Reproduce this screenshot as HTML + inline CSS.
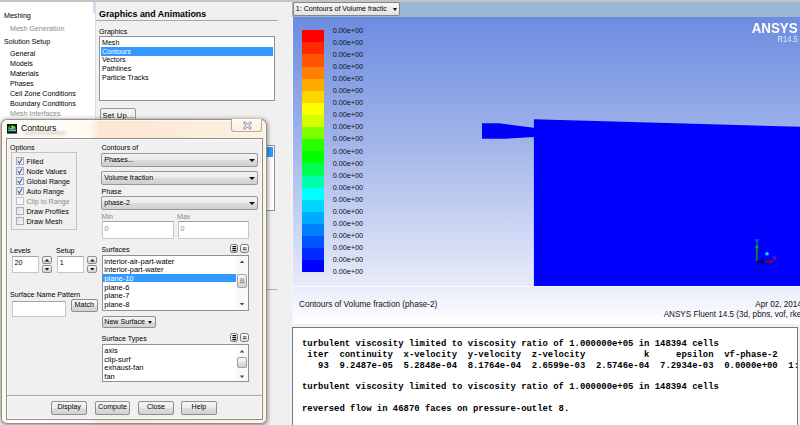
<!DOCTYPE html>
<html><head><meta charset="utf-8"><title>Fluent</title>
<style>
*{box-sizing:border-box;margin:0;padding:0}
html,body{width:800px;height:425px;overflow:hidden;background:#f0f0f0}
body{position:relative;font-family:"Liberation Sans",sans-serif;font-size:7.1px;color:#000}
.a{position:absolute;white-space:nowrap}
.t{position:absolute;white-space:nowrap;line-height:12px;height:12px}
.g{color:#8a8a8a}
.lb{position:absolute;background:#fff;border:1px solid #8c919a}
.sel{position:absolute;background:#3399ff}
.btn{position:absolute;border:1px solid #8e8f8f;border-radius:2px;background:linear-gradient(#f4f4f4 0%,#ececec 48%,#dedede 52%,#d2d2d2 100%);text-align:center;line-height:11px;white-space:nowrap}
.dd{position:absolute;border:1px solid #979797;border-radius:2px;background:linear-gradient(#f2f2f2 0%,#ebebeb 48%,#dddddd 52%,#cfcfcf 100%);line-height:12px;padding-left:2.2px;white-space:nowrap}
.dd:after{content:"";position:absolute;right:2px;top:5px;border:3px solid transparent;border-top:3.5px solid #111;border-bottom:0}
.inp{position:absolute;background:#fff;border:1px solid #c3c7cf;border-top-color:#a0a3aa;line-height:12px;padding-left:2px}
.cb{position:absolute;width:8px;height:8px;border:1px solid #a9adb4;background:linear-gradient(135deg,#d9dde4,#fafafa)}
.ck{position:absolute;font-size:7.1px;line-height:8px;color:#3a4fb0;font-weight:bold}
.con{position:absolute;font-family:"Liberation Mono",monospace;font-weight:bold;font-size:8.92px;line-height:10.7px;white-space:pre;color:#000}
.lg{position:absolute;left:332.7px;font-size:7.25px;line-height:10px;height:10px;color:#111;white-space:nowrap}
</style></head><body>
<!-- top bar -->
<div class="a" style="left:0;top:0;width:800px;height:2px;background:#c4c4c4"></div>
<!-- left nav -->
<div class="a" style="left:0;top:2px;width:95.2px;height:423px;background:#fff"></div>
<div class="a" style="left:92.7px;top:1.6px;width:2.4px;height:11.8px;background:linear-gradient(90deg,#c9d3ef,#dfe5f6)"></div>
<div class="t" style="left:4px;top:10.4px">Meshing</div>
<div class="t g" style="left:10px;top:23.4px">Mesh Generation</div>
<div class="t" style="left:4px;top:36px">Solution Setup</div>
<div class="t" style="left:10px;top:48.4px">General</div>
<div class="t" style="left:10px;top:58.1px">Models</div>
<div class="t" style="left:10px;top:68.1px">Materials</div>
<div class="t" style="left:10px;top:78.1px">Phases</div>
<div class="t" style="left:10px;top:88.1px">Cell Zone Conditions</div>
<div class="t" style="left:10px;top:98.1px">Boundary Conditions</div>
<div class="t g" style="left:10px;top:108.2px">Mesh Interfaces</div>
<!-- task page -->
<div class="a" style="left:95.2px;top:2px;width:196.8px;height:423px;background:#f0f0f0;border-left:1px solid #dcdcdc"></div>
<div class="a" style="left:99px;top:7px;font-weight:bold;font-size:8.9px;line-height:14px;letter-spacing:0">Graphics and Animations</div>
<div class="a" style="left:95.6px;top:20px;width:182.4px;height:1px;background:#a8a8a8"></div>
<div class="t" style="left:99px;top:25.7px">Graphics</div>
<div class="lb" style="left:99px;top:36px;width:176px;height:65px"></div>
<div class="sel" style="left:101px;top:47px;width:172px;height:9px"></div>
<div class="t" style="left:102px;top:37px">Mesh</div>
<div class="t" style="left:102px;top:45.5px;color:#fff">Contours</div>
<div class="t" style="left:102px;top:54px">Vectors</div>
<div class="t" style="left:102px;top:63px">Pathlines</div>
<div class="t" style="left:102px;top:71.5px">Particle Tracks</div>
<div class="btn" style="left:100.3px;top:108.3px;width:35.6px;height:14px;font-size:7.5px;letter-spacing:.25px;line-height:13.4px;border-color:#9a9a9a;background:linear-gradient(#f6f6f6,#ebebeb)">Set Up...</div>
<!-- hidden listbox behind dialog -->
<div class="lb" style="left:200px;top:145px;width:75px;height:66px"></div>
<div class="sel" style="left:202px;top:147px;width:71px;height:10px"></div>
<div class="a" style="left:100px;top:289px;width:178px;height:1px;background:#b4b4b4"></div>


<!-- graphics window -->
<div class="a" style="left:292px;top:2px;width:508px;height:15px;background:#9bb5d4"></div>
<div class="a" style="left:292px;top:16.7px;width:508px;height:269.5px;background:linear-gradient(#6c8cdf 0%,#a2b5ea 47%,#e8ecfa 100%)"></div>
<div class="a" style="left:292px;top:17px;width:1px;height:307px;background:#f4f6ff"></div>
<div class="btn" style="left:292.8px;top:2.1px;width:107.2px;height:14px;text-align:left;padding-left:2px;font-size:7.1px;line-height:12px;overflow:hidden;background:linear-gradient(#f6f6f6,#e2e2e2);border-color:#858585">1: Contours of Volume fractic<span class="a" style="right:1.8px;top:5px;border:2.5px solid transparent;border-top:3px solid #111;border-bottom:0"></span></div>
<svg class="a" style="left:292px;top:16px" width="508" height="270" viewBox="292 16 508 270">
<polygon points="482,123.2 499,123.3 533.9,127.8 533.9,119.3 800,126.8 800,285.9 533.9,285.9 533.9,136.9 506,138.7 482,138.8" fill="#0000ff"/>
</svg>
<div id="legend">
<div class="a" style="left:302.2px;top:30.20px;width:21.8px;height:12.41px;background:#ff0000"></div>
<div class="a" style="left:302.2px;top:42.31px;width:21.8px;height:12.41px;background:#ff2a00"></div>
<div class="a" style="left:302.2px;top:54.42px;width:21.8px;height:12.41px;background:#ff5500"></div>
<div class="a" style="left:302.2px;top:66.53px;width:21.8px;height:12.41px;background:#ff8000"></div>
<div class="a" style="left:302.2px;top:78.64px;width:21.8px;height:12.41px;background:#ffaa00"></div>
<div class="a" style="left:302.2px;top:90.75px;width:21.8px;height:12.41px;background:#ffd500"></div>
<div class="a" style="left:302.2px;top:102.86px;width:21.8px;height:12.41px;background:#ffff00"></div>
<div class="a" style="left:302.2px;top:114.97px;width:21.8px;height:12.41px;background:#d4ff00"></div>
<div class="a" style="left:302.2px;top:127.08px;width:21.8px;height:12.41px;background:#80ff00"></div>
<div class="a" style="left:302.2px;top:139.19px;width:21.8px;height:12.41px;background:#2aff00"></div>
<div class="a" style="left:302.2px;top:151.30px;width:21.8px;height:12.41px;background:#00ff00"></div>
<div class="a" style="left:302.2px;top:163.41px;width:21.8px;height:12.41px;background:#00ff55"></div>
<div class="a" style="left:302.2px;top:175.52px;width:21.8px;height:12.41px;background:#00ffaa"></div>
<div class="a" style="left:302.2px;top:187.63px;width:21.8px;height:12.41px;background:#00ffff"></div>
<div class="a" style="left:302.2px;top:199.74px;width:21.8px;height:12.41px;background:#00d4ff"></div>
<div class="a" style="left:302.2px;top:211.85px;width:21.8px;height:12.41px;background:#00aaff"></div>
<div class="a" style="left:302.2px;top:223.96px;width:21.8px;height:12.41px;background:#0080ff"></div>
<div class="a" style="left:302.2px;top:236.07px;width:21.8px;height:12.41px;background:#0055ff"></div>
<div class="a" style="left:302.2px;top:248.18px;width:21.8px;height:12.41px;background:#002aff"></div>
<div class="a" style="left:302.2px;top:260.29px;width:21.8px;height:12.11px;background:#0000ff"></div>
<div class="lg" style="top:25.90px">0.00e+00</div>
<div class="lg" style="top:37.97px">0.00e+00</div>
<div class="lg" style="top:50.03px">0.00e+00</div>
<div class="lg" style="top:62.10px">0.00e+00</div>
<div class="lg" style="top:74.16px">0.00e+00</div>
<div class="lg" style="top:86.22px">0.00e+00</div>
<div class="lg" style="top:98.29px">0.00e+00</div>
<div class="lg" style="top:110.36px">0.00e+00</div>
<div class="lg" style="top:122.42px">0.00e+00</div>
<div class="lg" style="top:134.49px">0.00e+00</div>
<div class="lg" style="top:146.55px">0.00e+00</div>
<div class="lg" style="top:158.62px">0.00e+00</div>
<div class="lg" style="top:170.68px">0.00e+00</div>
<div class="lg" style="top:182.75px">0.00e+00</div>
<div class="lg" style="top:194.81px">0.00e+00</div>
<div class="lg" style="top:206.88px">0.00e+00</div>
<div class="lg" style="top:218.94px">0.00e+00</div>
<div class="lg" style="top:231.01px">0.00e+00</div>
<div class="lg" style="top:243.07px">0.00e+00</div>
<div class="lg" style="top:255.14px">0.00e+00</div>
<div class="lg" style="top:267.20px">0.00e+00</div>
</div>
<div class="a" style="right:2.8px;top:19.9px;color:#fff;font-weight:bold;font-size:15px;line-height:16px;transform:scaleX(.89);transform-origin:100% 50%">ANSYS</div>
<div class="a" style="right:2.6px;top:35.4px;color:#dfe5f8;font-size:8.2px;line-height:9px;transform:scaleX(.93);transform-origin:100% 50%">R14.5</div>
<!-- axes triad -->
<svg class="a" style="left:750px;top:235px" width="34" height="34" viewBox="750 235 34 34">
<line x1="756.9" y1="262" x2="756.9" y2="245" stroke="#14a014" stroke-width="1.5"/>
<polygon points="754.9,248.2 758.9,248.2 756.9,243.2" fill="#14a014"/>
<line x1="757" y1="261.8" x2="771" y2="261.8" stroke="#a80000" stroke-width="1.5"/>
<polygon points="769.5,259.9 774,261.8 769.5,263.7" fill="#a80000"/>
<rect x="756.4" y="260.4" width="8.4" height="2.9" rx="1.3" fill="#000078"/>
<ellipse cx="762" cy="261.4" rx="2" ry="1.9" fill="#000068"/>
<circle cx="767" cy="253.8" r="1.8" fill="#00d8ff"/>
<text x="754.7" y="244" font-family="Liberation Sans,sans-serif" font-size="6.6" fill="#28c050">Y</text>
<text x="771.6" y="261" font-family="Liberation Sans,sans-serif" font-size="7.6" fill="#b81488">X</text>
</svg>
<!-- caption area -->
<div class="a" style="left:292px;top:285.9px;width:508px;height:1.2px;background:#f8faff"></div>
<div class="a" style="left:293px;top:287px;width:507px;height:37px;background:linear-gradient(#e9ecfb,#ffffff)"></div>
<div class="a" style="left:299px;top:298.8px;font-size:8.2px;line-height:11px;color:#111">Contours of Volume fraction (phase-2)</div>
<div class="a" style="right:-1.8px;top:299.4px;font-size:8.15px;line-height:11px;color:#111">Apr 02, 2014</div>
<div class="a" style="right:-4.1px;top:308.9px;font-size:8.15px;line-height:11px;color:#111">ANSYS Fluent 14.5 (3d, pbns, vof, rke)</div>
<!-- console -->
<div class="a" style="left:291px;top:324px;width:509px;height:3px;background:#f0f0f0"></div>
<div class="a" style="left:292px;top:326.5px;width:506px;height:99px;background:#fff;border:1px solid #7a7a7a;border-bottom:0"></div>
<div class="a" style="left:798px;top:326px;width:2px;height:99px;background:#f0f0f0"></div>
<div class="con" style="left:302px;top:339.4px">turbulent viscosity limited to viscosity ratio of 1.000000e+05 in 148394 cells
 iter  continuity  x-velocity  y-velocity  z-velocity           k     epsilon  vf-phase-2
   93  9.2487e-05  5.2848e-04  8.1764e-04  2.6599e-03  2.5746e-04  7.2934e-03  0.0000e+00  1:

turbulent viscosity limited to viscosity ratio of 1.000000e+05 in 148394 cells

reversed flow in 46870 faces on pressure-outlet 8.</div>

<!-- DIALOG -->
<div id="dlg" class="a" style="left:1px;top:119px;width:266px;height:304.5px;background:linear-gradient(90deg,#fdfaee 0px,#fffcf3 10px,#fffaf2 88px,#fbe7d3 97px,#fcebd9 170px,#fdf2e4 266px);border:1px solid rgba(105,100,92,.7);border-radius:6px;box-shadow:0 1px 4px 1px rgba(0,0,0,.4),inset 0 0 0 1px rgba(255,255,255,.6)">
</div>
<div class="a" style="left:6px;top:138px;width:256.5px;height:281.5px;background:#f0f0f0;border:1px solid #8f8d89;box-shadow:inset 0 0 0 1px rgba(255,255,255,.7)"></div>
<!-- title -->
<div class="a" style="left:8px;top:121px;width:70px;height:15px;border-radius:8px;background:radial-gradient(ellipse at 45% 50%,rgba(255,255,255,.85) 0%,rgba(255,255,255,.5) 45%,rgba(255,255,255,0) 75%)"></div>
<div class="a" style="left:24px;top:131px;width:42px;height:4px;border-radius:2px;background:rgba(120,90,70,.18);filter:blur(1.2px)"></div>
<svg class="a" style="left:6.8px;top:124px" width="10" height="10" viewBox="0 0 10 10">
<rect width="10" height="9.6" fill="#101010"/>
<path d="M1.2 3.6 Q2.4 1.4 5.6 1.6 Q8.6 1.8 8.8 4 L8.8 5.6 L1.2 5.6Z" fill="#22dd22"/>
<path d="M4.2 2.6 Q6 2.2 7.2 3.4 L7.2 5.2 L4.6 5 Q3.4 4 4.2 2.6Z" fill="#e8e820"/>
<path d="M6 3.6 L8.6 4 L8.6 5.6 L6.4 5.4Z" fill="#ee3311"/>
<circle cx="3.8" cy="3.4" r="0.9" fill="#102010"/>
<rect x="1.2" y="5.6" width="7.8" height="1.4" fill="#22ccdd"/>
<rect x="1.2" y="7" width="7.8" height="0.8" fill="#2244cc"/>
</svg>
<div class="a" style="left:21px;top:121.3px;font-size:8.7px;line-height:14px;color:#000">Contours</div>
<div class="a" style="left:231px;top:119px;width:31px;height:13px;border:1px solid #b3aa9c;border-top:0;border-radius:0 0 3px 3px;background:linear-gradient(#fff9f0,#fcf0e0)"></div>
<svg class="a" style="left:243px;top:121px" width="9" height="9" viewBox="0 0 9 9"><path d="M1.8 1.9 L7.2 7.1 M7.2 1.9 L1.8 7.1" stroke="#6a7188" stroke-width="2.5" stroke-linecap="square"/><path d="M1.8 1.9 L7.2 7.1 M7.2 1.9 L1.8 7.1" stroke="#ffffff" stroke-width="1.1" stroke-linecap="square"/></svg>

<!-- options -->
<div class="t" style="left:10px;top:141.5px">Options</div>
<div class="a" style="left:11px;top:151.5px;width:66px;height:78px;border:1px solid #c4c4c4"></div>
<div class="cb" style="left:16px;top:157px"></div><div class="t" style="left:26.5px;top:155.5px">Filled</div>
<div class="cb" style="left:16px;top:167px"></div><div class="t" style="left:26.5px;top:165.5px">Node Values</div>
<div class="cb" style="left:16px;top:177px"></div><div class="t" style="left:26.5px;top:175.5px">Global Range</div>
<div class="cb" style="left:16px;top:187px"></div><div class="t" style="left:26.5px;top:185.5px">Auto Range</div>
<div class="cb" style="left:16px;top:197px;border-color:#c0c0c0;background:#f6f6f6"></div><div class="t g" style="left:26.5px;top:195.5px">Clip to Range</div>
<div class="cb" style="left:16px;top:207px"></div><div class="t" style="left:26.5px;top:205.5px">Draw Profiles</div>
<div class="cb" style="left:16px;top:217px"></div><div class="t" style="left:26.5px;top:215.5px">Draw Mesh</div>
<svg class="a" style="left:16px;top:157px" width="8" height="40" viewBox="0 0 8 40"><g fill="none" stroke="#4256bc" stroke-width="1.05"><path d="M1.8 4 L3.4 6.2 L6.2 1.6"/><path d="M1.8 14 L3.4 16.2 L6.2 11.6"/><path d="M1.8 24 L3.4 26.2 L6.2 21.6"/><path d="M1.8 34 L3.4 36.2 L6.2 31.6"/></g></svg>

<!-- contours of -->
<div class="t" style="left:101.5px;top:142.2px">Contours of</div>
<div class="dd" style="left:101px;top:153.2px;width:157px;height:14px">Phases...</div>
<div class="dd" style="left:101px;top:170.5px;width:157px;height:14px">Volume fraction</div>
<div class="t" style="left:101.5px;top:185.5px">Phase</div>
<div class="dd" style="left:101px;top:195.6px;width:157px;height:14px">phase-2</div>
<div class="t g" style="left:101.5px;top:210.5px;font-size:7.1px">Min</div>
<div class="t g" style="left:177px;top:210.5px;font-size:7.1px">Max</div>
<div class="inp g" style="left:101.5px;top:221.4px;width:72px;height:17.6px;font-size:7.1px;line-height:14px">0</div>
<div class="inp g" style="left:177.5px;top:221.4px;width:71px;height:17.6px;font-size:7.1px;line-height:14px">0</div>

<!-- levels / setup -->
<div class="t" style="left:10px;top:244.5px">Levels</div>
<div class="t" style="left:56px;top:244.5px">Setup</div>
<div class="inp" style="left:11.5px;top:255.8px;width:27.5px;height:17px;line-height:13px">20</div>
<div class="inp" style="left:56.8px;top:255.8px;width:27.5px;height:17px;line-height:13px">1</div>
<div class="btn" style="left:42px;top:256.4px;width:10px;height:7.8px"></div>
<div class="btn" style="left:42px;top:265.2px;width:10px;height:7.8px"></div>
<div class="btn" style="left:87.4px;top:256.4px;width:10px;height:7.8px"></div>
<div class="btn" style="left:87.4px;top:265.2px;width:10px;height:7.8px"></div>
<svg class="a" style="left:42px;top:256px" width="56" height="18" viewBox="0 0 56 18"><g fill="#111"><path d="M2.7 5.6 L5 2.9 L7.3 5.6Z"/><path d="M2.7 11.9 L5 14.6 L7.3 11.9Z"/><path d="M48.1 5.6 L50.4 2.9 L52.7 5.6Z"/><path d="M48.1 11.9 L50.4 14.6 L52.7 11.9Z"/></g></svg>

<!-- surfaces -->
<div class="t" style="left:101.5px;top:243.5px">Surfaces</div>
<div class="btn" style="left:229.6px;top:243.5px;width:8.6px;height:9.2px;border-color:#777;border-radius:2.5px;background:linear-gradient(#fff,#e4e4e4)"></div><div class="btn" style="left:240px;top:243.5px;width:8.6px;height:9.2px;border-color:#777;border-radius:2.5px;background:linear-gradient(#fff,#e4e4e4)"></div>
<svg class="a" style="left:229.6px;top:243.5px" width="20" height="10" viewBox="0 0 20 10"><g stroke="#111"><path d="M2.4 2.7 H6.2 M2.4 4.6 H6.2 M2.4 6.5 H6.2" stroke-width="1.25"/><path d="M12.9 3.9 H16.5 M12.9 5.7 H16.5" stroke-width="0.8"/></g></svg>
<div class="lb" style="left:101.5px;top:254.5px;width:147px;height:56px"></div>
<div class="sel" style="left:103px;top:274px;width:133px;height:8.3px"></div>
<div class="t" style="left:104.3px;top:255.6px;font-size:7.5px">interior-air-part-water</div>
<div class="t" style="left:104.3px;top:264.3px;font-size:7.5px">interior-part-water</div>
<div class="t" style="left:104.3px;top:272.7px;font-size:7.5px;color:#fff">plane-10</div>
<div class="t" style="left:104.3px;top:281.5px;font-size:7.5px">plane-6</div>
<div class="t" style="left:104.3px;top:290px;font-size:7.5px">plane-7</div>
<div class="t" style="left:104.3px;top:298.8px;font-size:7.5px">plane-8</div>
<!-- scrollbar 1 -->
<div class="a" style="left:235.5px;top:255.5px;width:12px;height:54px;background:#f9f9f9"></div>
<div class="btn" style="left:236.5px;top:274px;width:10px;height:14px;border-color:#a0a0a0"></div>
<svg class="a" style="left:235.5px;top:256px" width="12" height="54" viewBox="0 0 12 54"><g fill="#444"><path d="M3.8 7 L6 4.6 L8.2 7Z"/><path d="M3.8 47 L6 49.4 L8.2 47Z"/></g><path d="M4 23 H8.4 M4 24.8 H8.4 M4 26.6 H8.4" stroke="#666" stroke-width=".7"/></svg>

<div class="t" style="left:10px;top:288.8px">Surface Name Pattern</div>
<div class="inp" style="left:12px;top:300.5px;width:54px;height:16px"></div>
<div class="btn" style="left:71px;top:299.4px;width:26.5px;height:13px;font-size:7.1px">Match</div>
<div class="btn" style="left:101.8px;top:315.6px;width:54px;height:12.6px;font-size:7.1px;line-height:10.6px;text-align:left;padding-left:1.5px">New Surface<span class="a" style="right:3px;top:4px;border:2.3px solid transparent;border-top:3px solid #111;border-bottom:0"></span></div>

<!-- surface types -->
<div class="t" style="left:101.5px;top:333.4px">Surface Types</div>
<div class="btn" style="left:229.6px;top:333.0px;width:8.6px;height:9.2px;border-color:#777;border-radius:2.5px;background:linear-gradient(#fff,#e4e4e4)"></div><div class="btn" style="left:240px;top:333.0px;width:8.6px;height:9.2px;border-color:#777;border-radius:2.5px;background:linear-gradient(#fff,#e4e4e4)"></div>
<svg class="a" style="left:229.6px;top:333.0px" width="20" height="10" viewBox="0 0 20 10"><g stroke="#111"><path d="M2.4 2.7 H6.2 M2.4 4.6 H6.2 M2.4 6.5 H6.2" stroke-width="1.25"/><path d="M12.9 3.9 H16.5 M12.9 5.7 H16.5" stroke-width="0.8"/></g></svg>
<div class="lb" style="left:101.5px;top:343.7px;width:147px;height:38.5px"></div>
<div class="t" style="left:104.3px;top:344.9px;font-size:7.5px">axis</div>
<div class="t" style="left:104.3px;top:353.7px;font-size:7.5px">clip-surf</div>
<div class="t" style="left:104.3px;top:362.1px;font-size:7.5px">exhaust-fan</div>
<div class="t" style="left:104.3px;top:370.7px;font-size:7.5px">fan</div>
<div class="a" style="left:235.5px;top:344.7px;width:12px;height:36.5px;background:#f9f9f9"></div>
<div class="btn" style="left:236.5px;top:357px;width:10px;height:10.5px;border-color:#a0a0a0"></div>
<svg class="a" style="left:235.5px;top:345.5px" width="12" height="36" viewBox="0 0 12 36"><g fill="#444"><path d="M3.8 6.4 L6 4 L8.2 6.4Z"/><path d="M3.8 29.6 L6 32 L8.2 29.6Z"/></g></svg>

<!-- buttons -->
<div class="a" style="left:7px;top:394.5px;width:254.5px;height:1px;background:#a6a6a6;box-shadow:0 1px 0 #f8f8f8"></div>
<div class="btn" style="left:51.4px;top:401.2px;width:35.4px;height:13.4px;font-size:7.1px;line-height:11.8px">Display</div>
<div class="btn" style="left:94.8px;top:401.2px;width:35.4px;height:13.4px;font-size:7.1px;line-height:11.8px">Compute</div>
<div class="btn" style="left:138.3px;top:401.2px;width:35.4px;height:13.4px;font-size:7.1px;line-height:11.8px">Close</div>
<div class="btn" style="left:181.2px;top:401.2px;width:35.4px;height:13.4px;font-size:7.1px;line-height:11.8px">Help</div>

</body></html>
